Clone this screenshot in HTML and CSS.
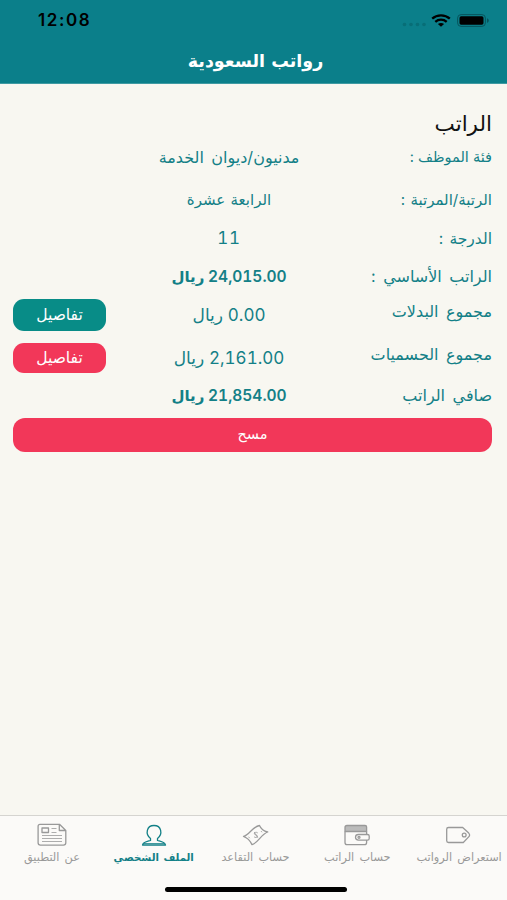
FILE: index.html
```html
<!DOCTYPE html>
<html lang="ar" dir="rtl">
<head>
  <meta charset="UTF-8">
  <meta name="viewport" content="width=device-width, initial-scale=1.0">
  <title>رواتب السعودية</title>
  <link rel="stylesheet" href="styles.css">
</head>
<body>
  <header>
    <div class="status-bar" dir="ltr">
      <span class="clock">12:08</span>
      <div class="status-icons">
        <svg class="dots" width="24" height="5" viewBox="0 0 24 5">
          <circle cx="2.5" cy="2.5" r="1.8"/><circle cx="9" cy="2.5" r="1.8"/><circle cx="15.5" cy="2.5" r="1.8"/><circle cx="22" cy="2.5" r="1.8"/>
        </svg>
        <svg class="wifi" width="20" height="13" viewBox="0 0 20 13" fill="none" stroke="#000" stroke-width="2.3">
          <path d="M1.2 4.7C6 .3 14 .3 18.8 4.7"/>
          <path d="M4.3 7.8c3.2-2.9 8.2-2.9 11.4 0"/>
          <path d="M10 12.8L6.9 10.1c1.8-1.5 4.4-1.5 6.2 0z" fill="#000" stroke="none"/>
        </svg>
        <svg class="battery" width="33" height="13" viewBox="0 0 33 13">
          <rect x=".6" y=".6" width="27.8" height="11.8" rx="3.5" fill="none" stroke="#06545c" stroke-width="1"/>
          <rect x="2.5" y="2.3" width="24" height="8.4" rx="1.6" fill="#000"/>
          <path d="M30 4.2c2.4 1 2.4 3.6 0 4.6z" fill="#06545c"/>
        </svg>
      </div>
    </div>
    <h1>رواتب السعودية</h1>
  </header>

  <main>
    <h2>الراتب</h2>

    <div class="row category">
      <span class="label">فئة الموظف :</span>
      <span class="value">مدنيون/ديوان الخدمة</span>
    </div>
    <div class="row rank">
      <span class="label">الرتبة/المرتبة :</span>
      <span class="value">الرابعة عشرة</span>
    </div>
    <div class="row grade">
      <span class="label">الدرجة :</span>
      <span class="value number"><span class="amount">11</span></span>
    </div>
    <div class="row basic">
      <span class="label">الراتب الأساسي :</span>
      <span class="value total"><span class="amount">24,015.00</span> ريال</span>
    </div>
    <div class="row allowances">
      <span class="label">مجموع البدلات</span>
      <span class="value number"><span class="amount">0.00</span> ريال</span>
      <button class="details">تفاصيل</button>
    </div>
    <div class="row deductions">
      <span class="label">مجموع الحسميات</span>
      <span class="value number"><span class="amount">2,161.00</span> ريال</span>
      <button class="details red">تفاصيل</button>
    </div>
    <div class="row net">
      <span class="label">صافي الراتب</span>
      <span class="value total"><span class="amount">21,854.00</span> ريال</span>
    </div>

    <button class="clear red">مسح</button>
  </main>

  <nav>
    <div class="tabs">
      <a class="tab">
        <svg width="30" height="26" viewBox="0 0 30 26">
          <path d="M4.500 4.500h14.200l6 5.600c1.200 1.200 1.200 2.600 0 3.800l-5.400 5.600H4.500c-1 0-1.800-.8-1.800-1.800V6.300c0-1 .8-1.800 1.800-1.800z"/>
          <circle cx="20.200" cy="12" r="1.900"/>
        </svg>
        <span>استعراض الرواتب</span>
      </a>
      <a class="tab">
        <svg width="30" height="26" viewBox="0 0 30 26">
          <path d="M3 8.500V19.500c0 1.400.8 2.200 2.200 2.200h17.200c1.400 0 2.200-.8 2.200-2.200V8.500"/>
          <path class="shade" d="M5 2.500h18c1 0 1.600.6 1.600 1.600v4.400H3v-4c0-1.200.8-2 2-2z"/>
          <path class="flap" d="M25.500 11.500H16.500c-2 0-3 1.200-3 2.800s1 2.800 3 2.800h9c1.200 0 1.700-.6 1.700-1.600v-2.400c0-1-.5-1.600-1.700-1.600z"/>
          <circle cx="17" cy="14.300" r="1"/>
        </svg>
        <span>حساب الراتب</span>
      </a>
      <a class="tab">
        <svg width="30" height="26" viewBox="0 0 30 26">
          <path d="M2.500 13.500C8 12.500 11.500 3.500 18.500 2.500c1.500 3.500 3.500 5.500 8.200 6.500C20 11.500 17 20 11 21.700 9.500 18.500 7 15 2.500 13.500z"/>
          <path class="lines" d="M16.800 10c-1-1.300-3.800-.7-3.500.9.300 1.400 2.800.6 3.200 2.100.3 1.600-2.600 2.100-3.500.7M13.200 9l3.600 5.800M7.500 13.700l1.200 1.500M20 8l1 1.300"/>
        </svg>
        <span>حساب التقاعد</span>
      </a>
      <a class="tab active">
        <svg width="30" height="26" viewBox="0 0 30 26">
          <path d="M11.500 17.500v-2C6 11 7.500 2.500 15 2.500s9 8.500 3.500 13v2c3.500 1 7.500 1.500 8 4.500h-23c.5-3 4.500-3.500 8-4.500z"/>
          <path class="lines" d="M5 20.500h20"/>
        </svg>
        <span>الملف الشخصي</span>
      </a>
      <a class="tab">
        <svg width="30" height="26" viewBox="0 0 30 26">
          <path d="M3 1.300h19.500l6.300 6.200v12.200c0 1.600-.8 2.400-2.400 2.400H3.500c-1.600 0-2.400-.8-2.400-2.400V3.300c0-1.200.7-2 1.900-2zM22.300 1.500v6h6.300"/>
          <rect x="5" y="5" width="6.500" height="4.500"/>
          <path class="lines" d="M14.500 5.500h5M14.500 9.500h5M5 12.500h20M5 15.500h20M5 18.500h20"/>
        </svg>
        <span>عن التطبيق</span>
      </a>
    </div>
    <div class="home-indicator"></div>
  </nav>
</body>
</html>
```

FILE: styles.css
```css
* {
  box-sizing: border-box;
}

body {
  margin: 0;
  height: 900px;
  display: flex;
  flex-direction: column;
  overflow: hidden;
  background-color: #f8f7f1;
  color: #138087;
  font-family: Inter, "DejaVu Sans", sans-serif;
}

header {
  height: 84px;
  background-color: #0b7f8a;
  border-bottom: 1px solid #3f9aa2;
}

.status-bar {
  height: 40px;
  padding: 0 17px 0 38px;
  display: flex;
  align-items: center;
  justify-content: space-between;
  color: #000;
}

.clock {
  font-size: 17px;
  font-weight: 600;
  letter-spacing: 1.6px;
}

.status-icons {
  display: flex;
  align-items: center;
}

.dots {
  fill: #086e77;
  margin: 8px 5px 0 0;
}

.wifi {
  margin-right: 6px;
}

h1 {
  margin: 0 -4px 0 0;
  height: 43px;
  line-height: 42px;
  text-align: center;
  color: #fff;
  font-size: 17.5px;
  font-weight: bold;
  word-spacing: 2px;
}

main {
  flex: 1;
  padding: 26px 15px 0 13px;
}

h2 {
  margin: 0;
  height: 26px;
  line-height: 27px;
  color: #111;
  font-size: 21.5px;
  font-weight: normal;
}

.row {
  display: grid;
  grid-template-columns: 1fr 186px 123px;
  align-items: center;
}

.label,
.value {
  font-size: 16px;
  word-spacing: 3px;
  white-space: nowrap;
}

.value {
  justify-self: center;
}

.amount {
  font-variant-numeric: tabular-nums;
  letter-spacing: 0.7px;
}

.number {
  font-size: 17px;
  word-spacing: 0;
}

.total {
  font-size: 15px;
  font-weight: 600;
  word-spacing: 0;
}

.total .amount {
  font-size: 15.5px;
  letter-spacing: 1.1px;
}

.category {
  height: 41px;
}

.category .label {
  font-size: 14.5px;
  word-spacing: 0;
}

.rank {
  height: 44px;
}

.rank .label,
.rank .value {
  font-size: 15px;
  word-spacing: 1px;
}

.grade {
  height: 34px;
}

.grade .label {
  font-size: 15.5px;
  word-spacing: 2px;
}

.basic {
  height: 42px;
}

.allowances {
  height: 36px;
}

.deductions {
  height: 50px;
}

.allowances .label,
.deductions .label {
  padding-bottom: 9px;
}

.net {
  height: 24px;
}

button {
  border: none;
  padding: 0 0 1px;
  background-color: #088c87;
  color: #fff;
  font-family: inherit;
  font-size: 15.5px;
}

.details {
  justify-self: end;
  width: 93px;
  height: 32px;
  border-radius: 11px;
}

.deductions .details {
  height: 30px;
}

.red {
  background-color: #f23759;
}

.clear {
  display: block;
  width: 100%;
  height: 34px;
  margin-top: 11px;
  padding-bottom: 3px;
  border-radius: 12px;
  font-size: 14.5px;
}

nav {
  height: 85px;
  background-color: #fbfaf8;
  border-top: 1px solid #d5d4d0;
}

.tabs {
  height: 69px;
  margin: 0 -3px 0 1px;
  display: grid;
  grid-template-columns: repeat(5, 20%);
}

.tab {
  display: flex;
  flex-direction: column;
  align-items: center;
  padding-top: 7px;
  color: #999;
  font-size: 11.3px;
  word-spacing: 2px;
  white-space: nowrap;
}

.tab svg {
  fill: none;
  stroke: currentColor;
  stroke-width: 1.3;
  stroke-linejoin: round;
}

.tab span {
  line-height: 12px;
  margin-top: 2px;
}

.tab .shade {
  fill: #bbb;
}

.tab .flap {
  fill: #fbfaf8;
}

.tab .lines {
  stroke-width: 0.8;
}

.tab.active {
  color: #138087;
  font-size: 10.2px;
  font-weight: bold;
}

.home-indicator {
  width: 182px;
  height: 5px;
  margin: 2px 160px 0 auto;
  border-radius: 3px;
  background-color: #000;
}
```
